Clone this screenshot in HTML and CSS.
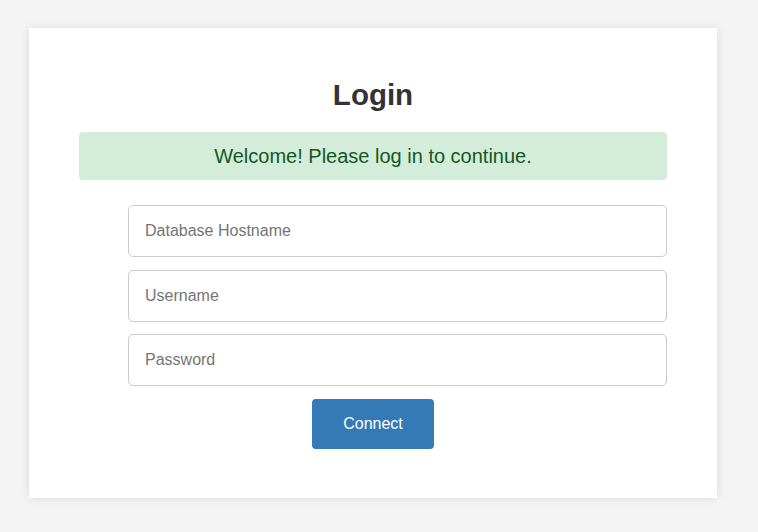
FILE: index.html
```html
<!DOCTYPE html>
<html lang="en">
<head>
<meta charset="utf-8">
<title>Login</title>
<link rel="stylesheet" href="styles.css">
</head>
<body>
  <div class="card">
    <h2 class="title">Login</h2>
    <div class="alert">Welcome! Please log in to continue.</div>
    <form class="form">
      <input class="field" type="text" placeholder="Database Hostname">
      <input class="field" type="text" placeholder="Username">
      <input class="field" type="password" placeholder="Password">
      <div class="actions">
        <button class="btn" type="button">Connect</button>
      </div>
    </form>
  </div>
</body>
</html>
```

FILE: styles.css
```css
* { box-sizing: border-box; }
html, body { margin: 0; }
body {
  background: #f4f4f4;
  font-family: "Liberation Sans", Arial, sans-serif;
  padding: 28px 0 0 29px;
  height: 532px;
}
.card {
  width: 688px;
  height: 470px;
  background: #fff;
  box-shadow: 0 0 10px rgba(0, 0, 0, 0.1);
  padding: 50px;
}
.title {
  margin: 0 0 20px;
  font-size: 29.5px;
  line-height: 34px;
  font-weight: bold;
  color: #333;
  text-align: center;
}
.alert {
  background: #d4edda;
  color: #155724;
  border-radius: 4px;
  font-size: 20px;
  line-height: 24px;
  padding: 12px;
  text-align: center;
}
.form {
  margin-top: 25px;
  padding-left: 49px;
  display: flex;
  flex-direction: column;
  gap: 12.5px;
}
.field {
  display: block;
  width: 100%;
  height: 52px;
  border: 1px solid #ccc;
  border-radius: 5px;
  padding: 0 16px;
  font-family: inherit;
  font-size: 16px;
  color: #333;
  background: #fff;
  outline: none;
}
.field::placeholder { color: #757575; }
.actions {
  display: flex;
  justify-content: center;
  margin-left: -49px;
}
.btn {
  width: 122px;
  height: 50px;
  background: #337ab7;
  color: #fff;
  border: none;
  border-radius: 4px;
  font-family: inherit;
  font-size: 16px;
  cursor: pointer;
}
```
